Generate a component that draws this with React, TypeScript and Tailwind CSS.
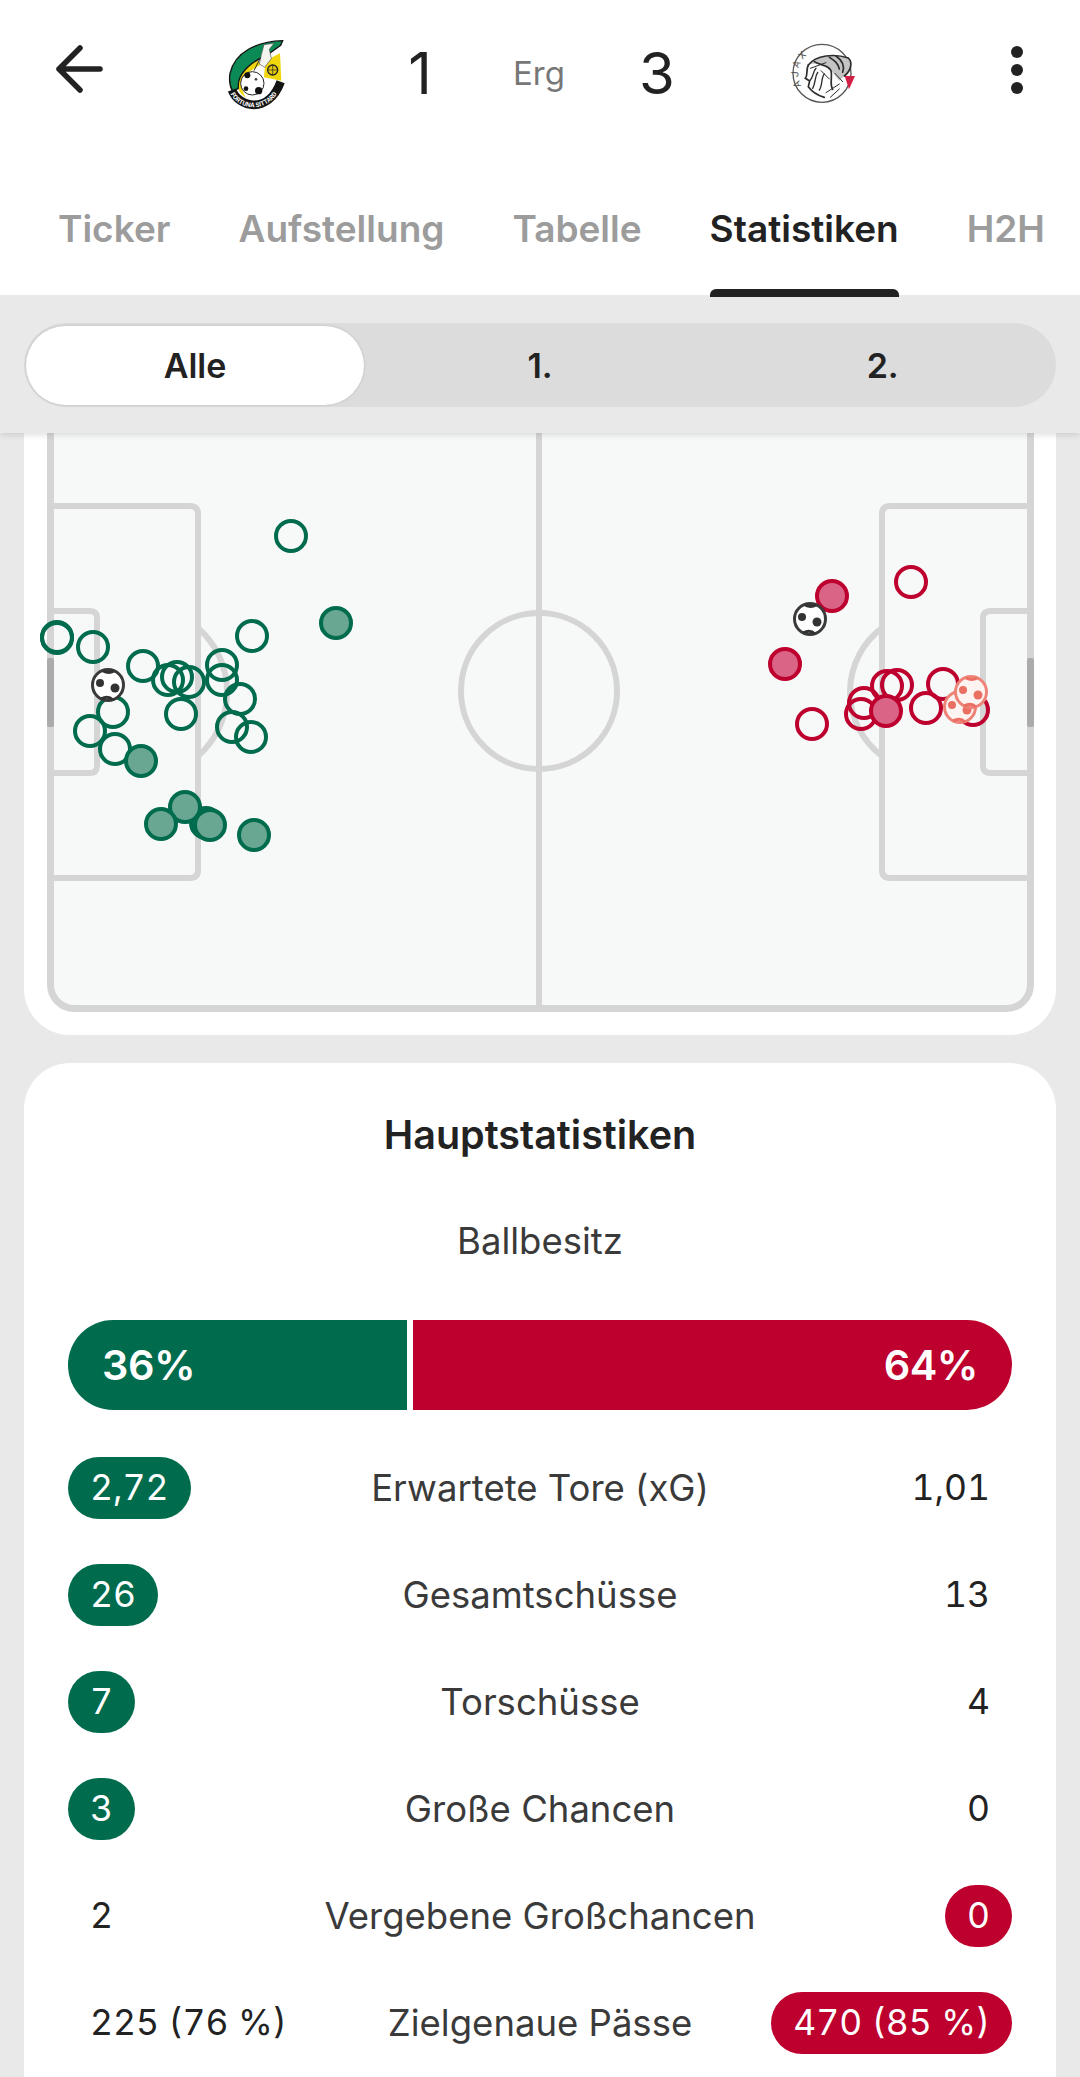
import React from "react";

const GREEN = "#006b4d";
const RED = "#bd002d";

type Shot = [number, number, number?];

const greenShots: Shot[] = [
  [291, 536], [336, 623, 1], [57, 637], [57, 638], [93, 647], [143, 666], [168, 680], [177, 677], [189, 682],
  [222, 665], [222, 680], [252, 636], [240, 699], [181, 714], [113, 712], [90, 731], [115, 749], [141, 761, 1],
  [206, 823, 1], [185, 807, 1], [161, 824, 1], [210, 825, 1], [254, 835, 1], [232, 727], [251, 737],
];

const redShots: Shot[] = [
  [911, 582], [832, 596, 1], [785, 664, 1], [812, 724], [864, 703], [861, 714], [897, 685], [887, 686],
  [943, 684], [926, 708], [973, 710], [886, 711, 1],
];

function Ball({ x, y, line, dot, fill }: { x: number; y: number; line: string; dot: string; fill: string }) {
  return (
    <g>
      <circle cx={x} cy={y} r={15.5} fill={fill} stroke={line} strokeWidth={3} />
      <circle cx={x - 8} cy={y - 2} r={4} fill={dot} />
      <circle cx={x + 7} cy={y + 3} r={4.5} fill={dot} />
      <path d={`M${x - 7} ${y + 14} q7 -4 12 1`} stroke={dot} strokeWidth={3} fill="none" />
      <path d={`M${x - 5} ${y - 14} q6 3 11 0`} stroke={dot} strokeWidth={3} fill="none" />
    </g>
  );
}

function Pitch() {
  const line = "#d5d5d5";
  return (
    <svg viewBox="24 433 1032 602" className="block w-full h-full">
      <rect x={50.5} y={380} width={980} height={628.5} rx={24} fill="#f7f9f9" stroke={line} strokeWidth={7} />
      <line x1={539} y1={380} x2={539} y2={1006} stroke={line} strokeWidth={6} />
      <circle cx={539} cy={691} r={78} fill="none" stroke={line} strokeWidth={6} />
      <path d="M50 506 H190 Q198 506 198 514 V870 Q198 878 190 878 H50" fill="none" stroke={line} strokeWidth={6} />
      <path d="M50 611 H90 Q97 611 97 618 V766 Q97 773 90 773 H50" fill="none" stroke={line} strokeWidth={6} />
      <path d="M1030 506 H890 Q882 506 882 514 V870 Q882 878 890 878 H1030" fill="none" stroke={line} strokeWidth={6} />
      <path d="M1030 611 H991 Q983 611 983 618 V766 Q983 773 991 773 H1030" fill="none" stroke={line} strokeWidth={6} />
      <path d="M198 628 A85 85 0 0 1 198 756" fill="none" stroke={line} strokeWidth={6} />
      <path d="M882 628 A80 80 0 0 0 882 756" fill="none" stroke={line} strokeWidth={6} />
      <rect x={47} y={658} width={7} height={69} rx={2} fill="#ababab" />
      <rect x={1027} y={658} width={7} height={69} rx={2} fill="#ababab" />
      {greenShots.map(([x, y, f], i) => (
        <circle key={i} cx={x} cy={y} r={15} fill={f ? "#6aa792" : "none"} stroke={GREEN} strokeWidth={4} />
      ))}
      <Ball x={108} y={685} line="#3a3a3a" dot="#333333" fill="#ffffff" />
      {redShots.map(([x, y, f], i) => (
        <circle key={i} cx={x} cy={y} r={15} fill={f ? "#da6485" : "none"} stroke={RED} strokeWidth={4} />
      ))}
      <Ball x={810} y={619} line="#3a3a3a" dot="#333333" fill="#ffffff" />
      <Ball x={960} y={707} line="#ee8377" dot="#ea6f62" fill="#fdf3f1" />
      <Ball x={971} y={692} line="#ee8377" dot="#ea6f62" fill="#fdf3f1" />
    </svg>
  );
}

function FortunaLogo() {
  return (
    <svg viewBox="0 0 300 300" className="w-[100px] h-[100px] shrink-0">
      <path d="M200 122 C165 130 143 160 143 195 C145 215 155 225 168 232 C150 210 150 170 178 155 L218 130 Z" fill="#f0d60c" />
      <path d="M226 122 L270 100 L274 182 L222 172 Z" fill="#f0d60c" />
      <path
        d="M278 62 C200 65 135 95 120 160 C116 185 120 200 128 215 L145 205 C140 165 180 125 228 108 L272 76 Z"
        fill="#0b8a55"
        stroke="#141414"
        strokeWidth={4}
      />
      <path d="M126 210 C145 262 235 285 272 185" fill="none" stroke="#141414" strokeWidth={26} />
      <circle cx={187} cy={190} r={35} fill="#ffffff" stroke="#222" strokeWidth={3} />
      <circle cx={172} cy={166} r={9} fill="#111" />
      <circle cx={206} cy={212} r={11} fill="#111" />
      <circle cx={168} cy={206} r={7} fill="#111" />
      <circle cx={198} cy={178} r={4} fill="#444" />
      <path d="M222 74 L252 70 L238 88 L244 116 L224 142 L208 132 L214 104 Z" fill="#f4f4f0" stroke="#555" strokeWidth={2} />
      <line x1={212} y1={112} x2={192} y2={152} stroke="#333" strokeWidth={3} />
      <circle cx={248} cy={150} r={15} fill="#e5c908" stroke="#222" strokeWidth={4} />
      <path d="M248 135 V165 M233 150 H263" stroke="#222" strokeWidth={2} />
      <defs>
        <path id="fortuna-arc" d="M122 222 C145 270 240 290 278 190" />
      </defs>
      <text fontSize={19} fontWeight={700} fill="#ffffff" fontFamily="Roboto, sans-serif">
        <textPath href="#fortuna-arc">FORTUNA SITTARD</textPath>
      </text>
    </svg>
  );
}

function AjaxLogo() {
  return (
    <svg viewBox="0 0 300 300" className="w-[100px] h-[100px] shrink-0">
      <circle cx={153} cy={160} r={87} fill="#fdfdfd" stroke="#555555" strokeWidth={4} />
      <defs>
        <path id="ajax-arc" d="M92 198 A72 72 0 0 1 195 102" />
      </defs>
      <text fontSize={30} fill="#555" fontFamily="Roboto, sans-serif" letterSpacing={9}>
        <textPath href="#ajax-arc">AJAX</textPath>
      </text>
      <path d="M118 132 C140 105 195 100 232 116 C244 130 238 150 222 166 L205 182 L170 140 C150 130 130 130 118 132 Z" fill="#c4c4c4" />
      <g fill="none" stroke="#2c2c2c" strokeLinecap="round">
        <path d="M112 135 C135 105 190 100 232 114 C246 128 240 152 220 168" strokeWidth={5} />
        <path d="M112 135 C104 150 112 165 103 175 L116 183 L112 200 C125 218 140 226 160 232" strokeWidth={5} />
        <path d="M130 125 C150 138 170 133 180 152 C185 172 175 192 185 208" strokeWidth={5} />
        <path d="M175 112 C190 122 200 127 205 147 M195 108 C215 122 222 137 215 157" strokeWidth={5} />
        <path d="M125 205 C135 188 130 172 140 157 M145 210 C155 197 150 172 160 162 M118 180 C128 170 125 155 135 145" strokeWidth={4} />
        <path d="M118 145 L165 128 M150 152 L175 177 M165 218 L205 192 M178 232 L205 207 M192 160 L215 185" strokeWidth={3} />
      </g>
      <path d="M221 168 L252 168 L234 208 Z" fill="#d21f45" />
    </svg>
  );
}

function Pill({ children, color }: { children: React.ReactNode; color?: "green" | "red" }) {
  if (!color) return <span className="px-[22px] text-[35.5px] text-[#222222] tabular-nums">{children}</span>;
  return (
    <span
      className={`flex h-[62px] min-w-[66px] items-center justify-center rounded-full px-[22px] text-[35.5px] text-white tabular-nums ${
        color === "green" ? "bg-[#006b4d]" : "bg-[#bd002d]"
      }`}
    >
      {children}
    </span>
  );
}

function Row({
  left,
  label,
  right,
  win,
}: {
  left: string;
  label: string;
  right: string;
  win: "green" | "red";
}) {
  return (
    <div className="grid h-[107px] grid-cols-[1fr_auto_1fr] items-center text-[36.5px] leading-[44px]">
      <div className="justify-self-start">
        <Pill color={win === "green" ? "green" : undefined}>{left}</Pill>
      </div>
      <div className="text-[#3a3a3a]">{label}</div>
      <div className="justify-self-end">
        <Pill color={win === "red" ? "red" : undefined}>{right}</Pill>
      </div>
    </div>
  );
}

export default function App() {
  const tabs = ["Ticker", "Aufstellung", "Tabelle", "Statistiken", "H2H"];
  return (
    <div className="flex h-[2077px] w-[1080px] flex-col overflow-hidden bg-[#e9e9e9] font-['Inter',sans-serif]">
      <header className="relative z-20 bg-white">
        <div className="flex h-[140px] items-center pl-[50px]">
          <svg viewBox="0 0 58 60" className="h-[60px] w-[58px] shrink-0">
            <path
              d="M30 8 L9 29 L30 50 M9 29 H50"
              fill="none"
              stroke="#222222"
              strokeWidth={5.5}
              strokeLinecap="round"
              strokeLinejoin="round"
            />
          </svg>
          <div className="ml-[82px]">
            <FortunaLogo />
          </div>
          <div className="ml-[90px] mt-[6px] w-[80px] text-center text-[58px] leading-[70px] font-normal text-[#222222]">1</div>
          <div className="ml-[29px] mt-[6px] w-[100px] text-center text-[33px] leading-[44px] text-[#777777]">Erg</div>
          <div className="ml-[28px] mt-[6px] w-[80px] text-center text-[58px] leading-[70px] font-normal text-[#222222]">3</div>
          <div className="ml-[74px]">
            <AjaxLogo />
          </div>
          <div className="ml-[136px] flex w-[20px] flex-col items-center gap-[6px]">
            <span className="h-[12px] w-[12px] rounded-full bg-[#222222]" />
            <span className="h-[12px] w-[12px] rounded-full bg-[#222222]" />
            <span className="h-[12px] w-[12px] rounded-full bg-[#222222]" />
          </div>
        </div>
        <nav className="flex h-[155px] items-end gap-[68px] pb-[44px] pl-[58px] text-[37px] leading-[44px] font-semibold whitespace-nowrap">
          {tabs.map((t) => (
            <div key={t} className={`relative ${t === "Statistiken" ? "text-[#222222]" : "text-[#9c9c9c]"}`}>
              {t}
              {t === "Statistiken" && (
                <span className="absolute bottom-[-46px] left-0 right-0 z-10 h-[8px] rounded-t-[6px] bg-[#222222]" />
              )}
            </div>
          ))}
        </nav>
      </header>

      <div className="relative z-10 flex h-[138px] items-start bg-[#e9e9e9] px-[24px] pt-[28px] shadow-[0_2px_6px_rgba(0,0,0,0.12)]">
        <div className="grid h-[84px] w-full grid-cols-3 items-center rounded-full bg-[#dcdcdc] px-[2px] text-[34px] font-semibold text-[#222222]">
          <div className="flex h-[79px] w-[338px] items-center justify-center rounded-full bg-white shadow-[0_0_3px_rgba(0,0,0,0.15)]">Alle</div>
          <div className="text-center">1.</div>
          <div className="text-center">2.</div>
        </div>
      </div>

      <section className="mx-[24px] h-[602px] shrink-0 overflow-hidden rounded-b-[46px] bg-white">
        <Pitch />
      </section>

      <section className="mx-[24px] mt-[28px] flex-1 rounded-t-[46px] bg-white px-[44px] pt-[50px]">
        <h2 className="text-center text-[39.5px] leading-[44px] font-semibold text-[#222222]">Hauptstatistiken</h2>
        <div className="mt-[62px] text-center text-[36.5px] leading-[44px] text-[#3a3a3a]">Ballbesitz</div>
        <div className="mt-[57px] flex h-[90px] gap-[6px] text-[41.5px] font-semibold tracking-[-0.5px] text-white">
          <div className="flex w-[339px] items-center rounded-l-full bg-[#006b4d] pl-[34px]">36%</div>
          <div className="flex flex-1 items-center justify-end rounded-r-full bg-[#bd002d] pr-[34px]">64%</div>
        </div>
        <div className="mt-[24px]">
          <Row left="2,72" label="Erwartete Tore (xG)" right="1,01" win="green" />
          <Row left="26" label="Gesamtschüsse" right="13" win="green" />
          <Row left="7" label="Torschüsse" right="4" win="green" />
          <Row left="3" label="Große Chancen" right="0" win="green" />
          <Row left="2" label="Vergebene Großchancen" right="0" win="red" />
          <Row left="225 (76 %)" label="Zielgenaue Pässe" right="470 (85 %)" win="red" />
        </div>
      </section>
    </div>
  );
}
